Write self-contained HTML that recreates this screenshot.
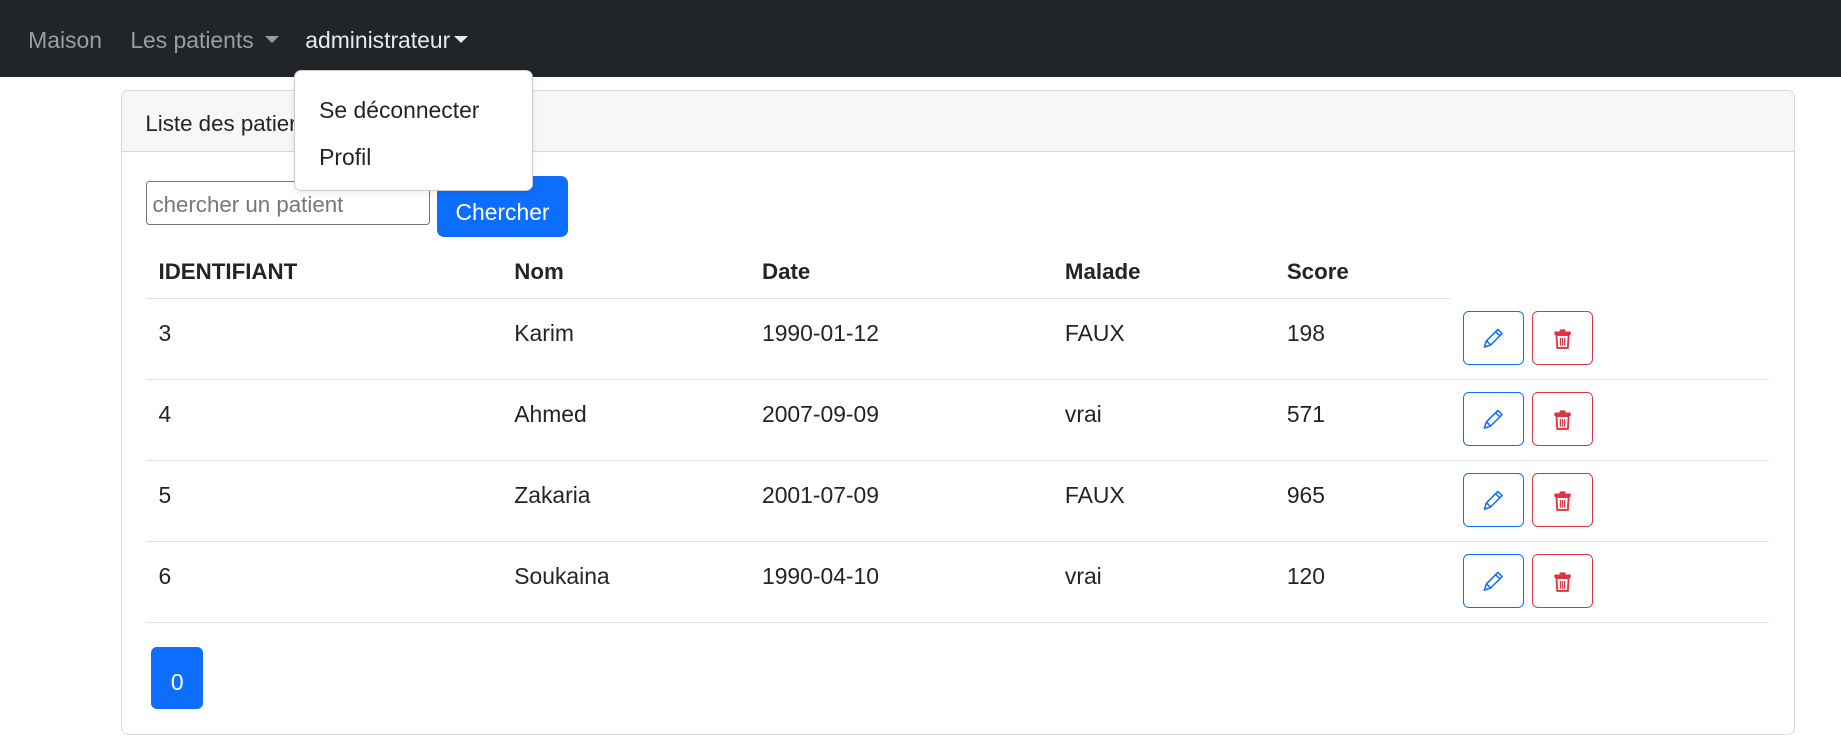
<!DOCTYPE html>
<html><head><meta charset="utf-8"><style>
html{zoom:1.17411}
body{margin:0;width:1568px;height:635px;background:#fff;font-family:"Liberation Sans",Arial,sans-serif;font-size:19.5px;color:#212529;position:relative;overflow:hidden}
.nav{position:absolute;left:0;top:0;width:1568px;height:66px;background:#212529}
.nav span{position:absolute;top:22px;line-height:24px;color:#9b9d9f}
.caret{display:inline-block;width:0;height:0;border-left:6px solid transparent;border-right:6px solid transparent;border-top:6px solid currentColor;vertical-align:4px;margin-left:6px}
.card{position:absolute;left:103px;top:77px;width:1424px;height:547px;border:1px solid #d9d9d9;border-radius:6px;overflow:hidden}
.hdr{height:51px;background:#f7f7f7;border-bottom:1px solid #d9d9d9;padding-left:20px;line-height:56px;font-size:19px}
.abs{position:absolute}
.txt{position:absolute;line-height:24px}
.b{font-weight:bold;font-size:19px}
.hl{position:absolute;height:1px;background:#dee2e6}
.btn{position:absolute;width:52px;height:46px;border-radius:5px;box-sizing:border-box;display:flex;align-items:center;justify-content:center}
.dd{position:absolute;left:250px;top:60px;width:202px;height:101px;background:#fff;border:1px solid #ccc;border-radius:6px;box-shadow:0 2px 6px rgba(0,0,0,.08)}
</style></head><body>
<div class="nav">
<span style="left:24px">Maison</span>
<span style="left:111px">Les patients<i class="caret" style="margin-left:10px"></i></span>
<span style="left:260px;color:#e8eaec">administrateur<i class="caret" style="margin-left:3px"></i></span>
</div>
<div class="card"><div class="hdr">Liste des patients</div></div>
<div class="abs" style="left:124px;top:154px;width:242px;height:38px;border:1px solid #767676;border-radius:3px;box-sizing:border-box;color:#777;line-height:40px;padding-left:5px;font-size:19px">chercher un patient</div>
<div class="abs" style="left:372px;top:150px;width:112px;height:52px;background:#0d6efd;border-radius:6px;color:#fff;text-align:center;line-height:62px">Chercher</div>

<div class="txt b" style="left:135px;top:220px">IDENTIFIANT</div>
<div class="txt b" style="left:438px;top:220px">Nom</div>
<div class="txt b" style="left:649px;top:220px">Date</div>
<div class="txt b" style="left:907px;top:220px">Malade</div>
<div class="txt b" style="left:1096px;top:220px">Score</div>
<div class="hl" style="left:124px;top:254px;width:1112px"></div>

<div class="txt" style="left:135px;top:272px">3</div><div class="txt" style="left:438px;top:272px">Karim</div><div class="txt" style="left:649px;top:272px">1990-01-12</div><div class="txt" style="left:907px;top:272px">FAUX</div><div class="txt" style="left:1096px;top:272px">198</div>
<div class="txt" style="left:135px;top:341px">4</div><div class="txt" style="left:438px;top:341px">Ahmed</div><div class="txt" style="left:649px;top:341px">2007-09-09</div><div class="txt" style="left:907px;top:341px">vrai</div><div class="txt" style="left:1096px;top:341px">571</div>
<div class="txt" style="left:135px;top:410px">5</div><div class="txt" style="left:438px;top:410px">Zakaria</div><div class="txt" style="left:649px;top:410px">2001-07-09</div><div class="txt" style="left:907px;top:410px">FAUX</div><div class="txt" style="left:1096px;top:410px">965</div>
<div class="txt" style="left:135px;top:479px">6</div><div class="txt" style="left:438px;top:479px">Soukaina</div><div class="txt" style="left:649px;top:479px">1990-04-10</div><div class="txt" style="left:907px;top:479px">vrai</div><div class="txt" style="left:1096px;top:479px">120</div>
<div class="hl" style="left:124px;top:323px;width:1383px"></div>
<div class="hl" style="left:124px;top:392px;width:1383px"></div>
<div class="hl" style="left:124px;top:461px;width:1383px"></div>
<div class="hl" style="left:124px;top:530px;width:1383px"></div>

<svg width="0" height="0" style="position:absolute"><defs>
<g id="pen"><path d="M2 18 L3.8 12.6 L13.5 2.9 L17.1 6.5 L7.4 16.2 Z M3.8 12.6 L7.4 16.2 M11.6 4.8 L15.2 8.4" fill="none" stroke="#0d6efd" stroke-width="1.3" stroke-linejoin="round"/></g>
<g id="bin"><rect x="2" y="3" width="14" height="3" fill="#dc3545" rx=".6"/><rect x="6.5" y="1.2" width="5" height="2.5" fill="#dc3545" rx=".5"/><path d="M3.8 6 L4.5 17 H13.5 L14.2 6 Z" fill="none" stroke="#dc3545" stroke-width="1.6"/><path d="M7.2 8.5v6.5M9 8.5v6.5M10.8 8.5v6.5" stroke="#dc3545" stroke-width="1.1"/></g>
</defs></svg>
<div class="btn" style="left:1246px;top:265px;border:1px solid #0d6efd"><svg width="20" height="20" viewBox="0 0 20 20"><use href="#pen"/></svg></div>
<div class="btn" style="left:1305px;top:265px;border:1px solid #dc3545"><svg width="18" height="18" viewBox="0 0 18 18"><use href="#bin"/></svg></div>
<div class="btn" style="left:1246px;top:334px;border:1px solid #0d6efd"><svg width="20" height="20" viewBox="0 0 20 20"><use href="#pen"/></svg></div>
<div class="btn" style="left:1305px;top:334px;border:1px solid #dc3545"><svg width="18" height="18" viewBox="0 0 18 18"><use href="#bin"/></svg></div>
<div class="btn" style="left:1246px;top:403px;border:1px solid #0d6efd"><svg width="20" height="20" viewBox="0 0 20 20"><use href="#pen"/></svg></div>
<div class="btn" style="left:1305px;top:403px;border:1px solid #dc3545"><svg width="18" height="18" viewBox="0 0 18 18"><use href="#bin"/></svg></div>
<div class="btn" style="left:1246px;top:472px;border:1px solid #0d6efd"><svg width="20" height="20" viewBox="0 0 20 20"><use href="#pen"/></svg></div>
<div class="btn" style="left:1305px;top:472px;border:1px solid #dc3545"><svg width="18" height="18" viewBox="0 0 18 18"><use href="#bin"/></svg></div>

<div class="abs" style="left:129px;top:551px;width:44px;height:53px;background:#0d6efd;border-radius:5px;color:#fff;text-align:center;line-height:60px">0</div>

<div class="dd">
<div class="txt" style="left:21px;top:21px">Se déconnecter</div>
<div class="txt" style="left:21px;top:61px">Profil</div>
</div>
</body></html>
